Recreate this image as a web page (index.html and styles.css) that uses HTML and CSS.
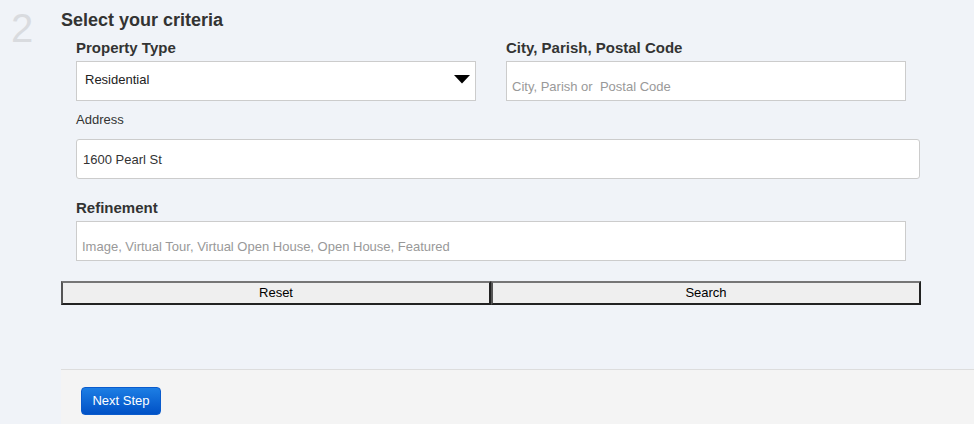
FILE: index.html
```html
<!DOCTYPE html>
<html lang="en">
<head>
<meta charset="utf-8">
<title>Select your criteria</title>
<link rel="stylesheet" href="styles.css">
</head>
<body>
<div class="wizard">
  <div class="step-num">2</div>
  <div class="step-main">
    <section class="criteria">
      <h2 class="title">Select your criteria</h2>
      <div class="fields">
        <div class="row">
          <div class="col">
            <label class="label-strong">Property Type</label>
            <div class="select">
              <span>Residential</span>
              <svg class="caret" width="16" height="9" viewBox="0 0 16 9"><path d="M0 0 H16 L8 8.5 Z" fill="#000"/></svg>
            </div>
          </div>
          <div class="col">
            <label class="label-strong">City, Parish, Postal Code</label>
            <input class="input input-low" type="text" placeholder="City, Parish or&nbsp; Postal Code">
          </div>
        </div>
        <div class="field">
          <label class="label">Address</label>
          <input class="input input-address" type="text" value="1600 Pearl St">
        </div>
        <div class="field field-gap">
          <label class="label-strong">Refinement</label>
          <input class="input input-refine" type="text" placeholder="Image, Virtual Tour, Virtual Open House, Open House, Featured">
        </div>
      </div>
      <div class="actions">
        <button class="btn" type="button">Reset</button>
        <button class="btn" type="button">Search</button>
      </div>
    </section>
    <footer class="footer">
      <button class="btn-primary" type="button">Next Step</button>
    </footer>
  </div>
</div>
</body>
</html>
```
FILE: styles.css
```css
html, body {
  margin: 0;
  padding: 0;
  height: 424px;
  overflow: hidden;
}
body {
  background: #f0f3f8;
  font-family: "Liberation Sans", Arial, Helvetica, sans-serif;
  color: #333;
}
.wizard {
  display: flex;
  height: 424px;
}
.step-num {
  width: 61px;
  flex: 0 0 61px;
  box-sizing: border-box;
  padding: 4px 0 0 11px;
  font-size: 40px;
  line-height: 48px;
  color: #d9dbdf;
}
.step-main {
  flex: 1;
  display: flex;
  flex-direction: column;
}
.criteria {
  flex: 1;
}
.title {
  margin: 9px 0 8px;
  font-size: 18px;
  line-height: 22px;
  font-weight: bold;
  color: #333;
}
.fields {
  padding-left: 15px;
}
.row {
  display: flex;
  gap: 30px;
}
.col {
  width: 400px;
  display: flex;
  flex-direction: column;
}
.field {
  display: flex;
  flex-direction: column;
  margin-top: 11px;
}
.field-gap {
  margin-top: 20px;
}
.label-strong {
  display: block;
  font-size: 15px;
  line-height: 18px;
  font-weight: bold;
  color: #333;
  margin-bottom: 4px;
}
.label {
  display: block;
  font-size: 13px;
  line-height: 16px;
  color: #333;
  margin-bottom: 11px;
}
.select {
  box-sizing: border-box;
  height: 40px;
  background: #fff;
  border: 1px solid #ccc;
  padding: 10px 5px 0 8px;
  font-size: 13px;
  line-height: 16px;
  color: #222;
  display: flex;
  justify-content: space-between;
  align-items: flex-start;
}
.caret {
  margin-top: 3px;
}
.input {
  box-sizing: border-box;
  height: 40px;
  margin: 0;
  background: #fff;
  border: 1px solid #ccc;
  border-radius: 0;
  font-family: "Liberation Sans", Arial, Helvetica, sans-serif;
  font-size: 13px;
  line-height: 16px;
  color: #333;
  outline: none;
}
.input::placeholder {
  color: #999;
  opacity: 1;
}
.input-low {
  width: 400px;
  padding: 16px 5px 6px;
}
.input-address {
  width: 844px;
  padding: 11px 6px 11px;
  border-radius: 3px;
}
.input-refine {
  width: 830px;
  padding: 16px 5px 6px;
}
.actions {
  display: flex;
  margin-top: 20px;
}
.btn {
  box-sizing: border-box;
  width: 430px;
  height: 24px;
  margin: 0;
  padding: 0;
  background: #efefef;
  border-style: solid;
  border-width: 2px;
  border-color: #767676 #222 #222 #555;
  font-family: "Liberation Sans", Arial, Helvetica, sans-serif;
  font-size: 13px;
  line-height: 16px;
  color: #000;
}
.footer {
  border-top: 1px solid #dddddd;
  background: #f4f4f4;
  padding: 17px 20px 9px;
}
.btn-primary {
  box-sizing: border-box;
  width: 80px;
  height: 28px;
  margin: 0;
  padding: 0;
  border: 1px solid #0a5bcc;
  border-radius: 4px;
  background: linear-gradient(#1d7ee4, #0051c6);
  color: #fff;
  font-family: "Liberation Sans", Arial, Helvetica, sans-serif;
  font-size: 13px;
  line-height: 16px;
  display: block;
}
```
